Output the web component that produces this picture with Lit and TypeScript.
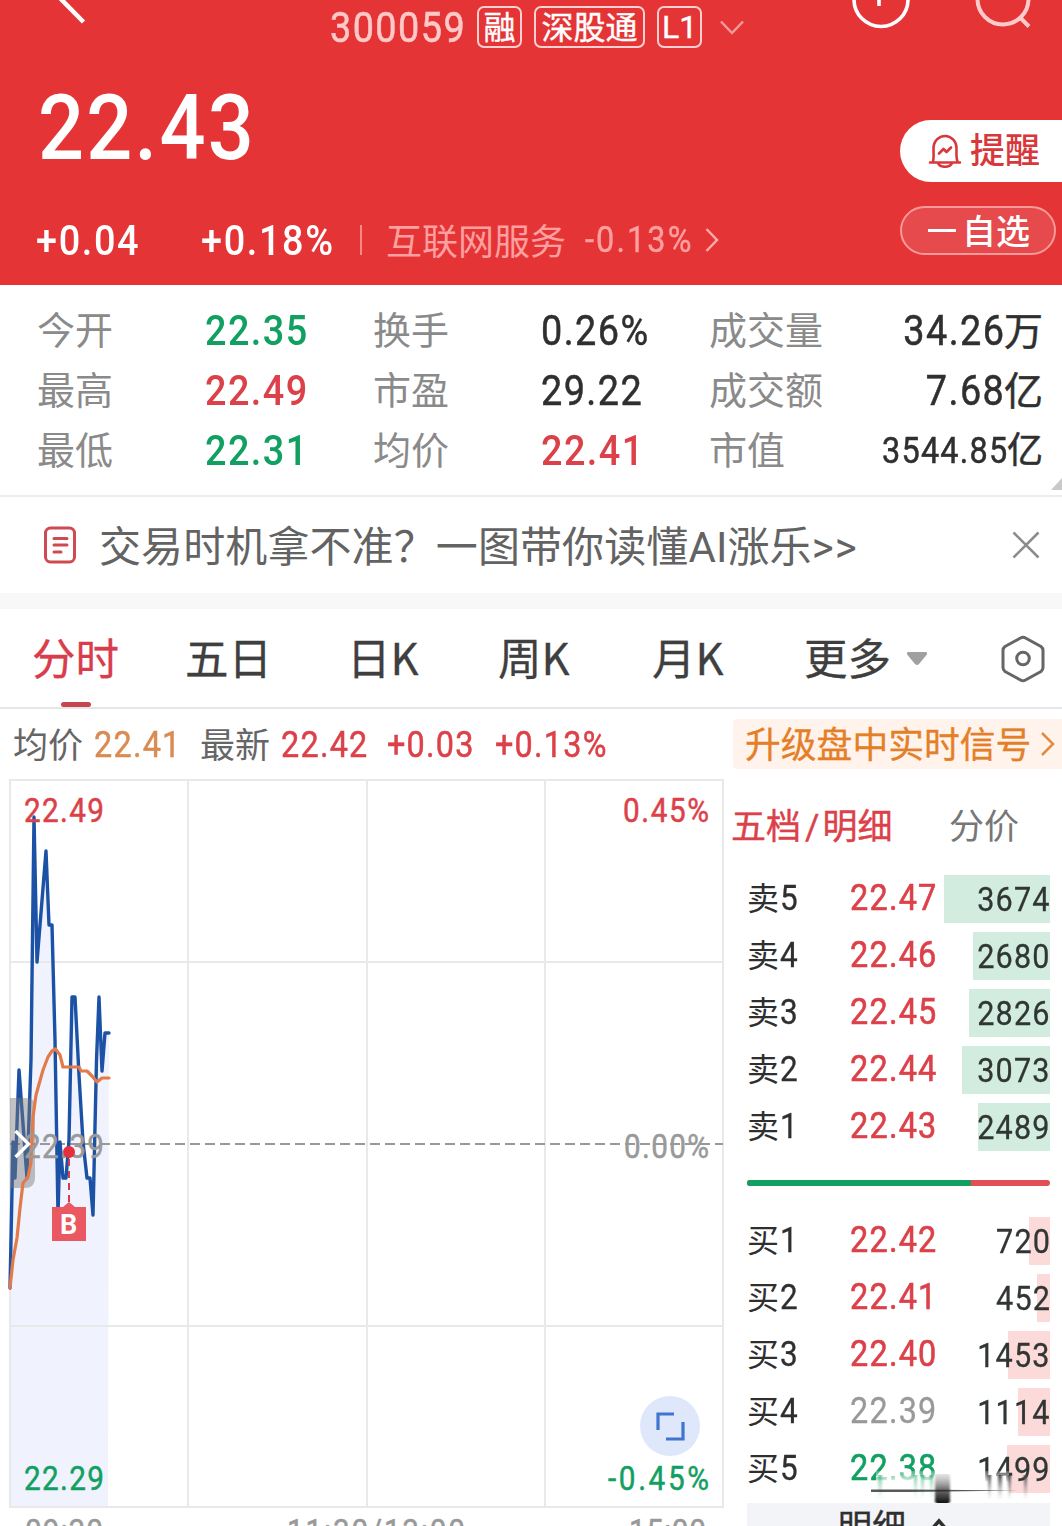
import { LitElement, html, css, svg } from "lit";
import { customElement } from "lit/decorators.js";
import { classMap } from "lit/directives/class-map.js";

const base = css`
  :host {
    display: block;
    box-sizing: border-box;
    font-family: Roboto, "Noto Sans CJK SC", sans-serif;
    white-space: nowrap;
  }
  * {
    box-sizing: border-box;
  }
  svg {
    display: block;
    flex: none;
  }
  .n {
    display: inline-block;
    transform: scaleX(0.9);
    transform-origin: left;
    letter-spacing: 0.038em;
  }
  .n.r {
    transform-origin: right;
    margin-right: -0.03em;
  }
  .red { color: #dc4149; }
  .green { color: #12a062; }
  .gray { color: #999; }
  .dark { color: #2f2f2f; }
`;

@customElement("quote-header")
class QuoteHeader extends LitElement {
  static styles = [
    base,
    css`
      :host {
        height: 285px;
        background: #e43436;
        color: #fff;
        overflow: hidden;
      }
      .top { display: flex; height: 54px; align-items: flex-start; }
      .back { margin-left: 55px; }
      .code {
        margin-left: 239px;
        width: 147px;
        font-size: 42px;
        line-height: 55px;
        color: #ffc9c8;
        -webkit-text-stroke: 0.5px #ffc9c8;
      }
      .tag {
        margin-top: 6px;
        height: 42px;
        line-height: 40px;
        border: 2px solid #ffd0cf;
        border-radius: 7px;
        font-size: 32px;
        text-align: center;
        margin-right: 12px;
        -webkit-text-stroke: 0.4px #fff;
      }
      .t1 { width: 45px; }
      .t2 { width: 111px; }
      .t3 { width: 45px; line-height: 39px; }
      .down { margin: 20px 0 0 6px; }
      .info { margin-left: 106px; }
      .search { margin-left: 60px; }
      .mid { display: flex; justify-content: space-between; height: 146px; }
      .price {
        padding-left: 38px;
        font-size: 90px;
        font-weight: 500;
        line-height: 149px;
      }
      .price .n { letter-spacing: 0.028em; }
      .remind {
        margin-top: 66px;
        width: 162px;
        height: 62px;
        border-radius: 31px 0 0 31px;
        background: #fff;
        color: #d8383c;
        display: flex;
        align-items: center;
        padding: 0 0 0 28px;
        font-size: 35px;
        line-height: 64px;
        font-weight: 500;
      }
      .remind span { margin-left: 8px; height: 62px; }
      .low { display: flex; height: 80px; align-items: center; }
      .chg { font-size: 42px; font-weight: 500; line-height: 81px; }
      .chg .n { letter-spacing: 0.044em; }
      .c1 { width: 165px; padding-left: 36px; }
      .c2 { width: 195px; padding-left: 36px; }
      .bar { width: 2px; height: 30px; background: #f58a8a; }
      .sector { margin: -3px 0 0 24px; font-size: 36px; color: #ff9f9f; }
      .sub { margin-left: 19px; font-size: 36px; width: 120px; color: #ff9f9f; }
      .sub .n { letter-spacing: 0.065em; -webkit-text-stroke: 0.4px; }
      .fav {
        margin: -19px 0 0 181px;
        width: 156px;
        height: 49px;
        border: 2px solid #f89a9a;
        border-radius: 25px;
        background: #e64a4c;
        display: flex;
        align-items: center;
        padding-left: 26px;
        font-size: 34px;
        line-height: 48px;
        font-weight: 500;
      }
      .fav i { width: 28px; height: 3px; background: #fff; margin-right: 6px; }
      .fav span { height: 45px; }
    `,
  ];
  render() {
    return html`
      <div class="top">
        <svg class="back" width="36" height="30" fill="none" stroke="#fff" stroke-width="4.5">
          <path d="M0 -7L28.500 22" />
        </svg>
        <span class="code"><span class="n">300059</span></span>
        <span class="tag t1">融</span>
        <span class="tag t2">深股通</span>
        <span class="tag t3">L1</span>
        <svg class="down" width="24" height="16" fill="none" stroke="#f59a9a" stroke-width="2.500">
          <path d="M1 1.500L12 13L23 1.500" />
        </svg>
        <svg class="info" width="62" height="32" fill="none" stroke="#fff" stroke-width="3.600">
          <circle cx="31" cy="-.5" r="27" />
          <path d="M29 -4V6" />
        </svg>
        <svg class="search" width="62" height="32" fill="none" stroke="#ffcccb" stroke-width="4">
          <circle cx="31" cy="-1" r="25.500" />
          <path d="M47 16.500L57 26.500" />
        </svg>
      </div>
      <div class="mid">
        <span class="price"><span class="n">22.43</span></span>
        <div class="remind">
          <svg width="34" height="34" fill="none" stroke="#d8383c" stroke-width="2.600" stroke-linejoin="round" stroke-linecap="round">
            <path d="M5 27.500C6 24 5.500 19 5.500 14.500C5.500 7 11 2 17 2S28.500 7 28.500 14.500C28.500 19 28 24 29.500 27.500" />
            <path d="M2 28.500H32M10 29C12 34 22 34 24 29M11 19.500L15.500 15L18.500 18L23 13.500" />
          </svg>
          <span>提醒</span>
        </div>
      </div>
      <div class="low">
        <span class="chg c1"><span class="n">+0.04</span></span>
        <span class="chg c2"><span class="n">+0.18%</span></span>
        <i class="bar"></i>
        <span class="sector">互联网服务</span>
        <span class="sub"><span class="n">-0.13%</span></span>
        <svg width="14" height="26" fill="none" stroke="#ffaaaa" stroke-width="2.500">
          <path d="M1.500 2L12 13L1.500 24" />
        </svg>
        <div class="fav"><i></i><span>自选</span></div>
      </div>
    `;
  }
}

@customElement("quote-stats")
class QuoteStats extends LitElement {
  static styles = [
    base,
    css`
      :host {
        height: 212px;
        padding-top: 16px;
        border-bottom: 2px solid #ececec;
        background: #fff;
        position: relative;
      }
      .grid {
        display: grid;
        grid-template-columns: 168px 168px 168px 168px 130px 204px;
        grid-auto-rows: 60px;
        line-height: 60px;
        padding-left: 37px;
        font-size: 42px;
      }
      .label { font-size: 38px; color: #8a8a8a; line-height: 61px; }
      .num { font-weight: 500; }
      .dark { font-weight: 400; -webkit-text-stroke: 0.5px #2f2f2f; }
      .last { text-align: right; }
      .last small { font-size: 39px; }
      .small { font-size: 36px; }
      .small small { font-size: 36px; }
      .corner { position: absolute; right: 0; bottom: 5px; }
    `,
  ];
  render() {
    return html`
      <div class="grid">
        <span class="label">今开</span><span class="num green"><span class="n">22.35</span></span>
        <span class="label">换手</span><span class="num dark"><span class="n">0.26%</span></span>
        <span class="label">成交量</span><span class="num dark last"><span class="n r">34.26</span><small>万</small></span>
        <span class="label">最高</span><span class="num red"><span class="n">22.49</span></span>
        <span class="label">市盈</span><span class="num dark"><span class="n">29.22</span></span>
        <span class="label">成交额</span><span class="num dark last"><span class="n r">7.68</span><small>亿</small></span>
        <span class="label">最低</span><span class="num green"><span class="n">22.31</span></span>
        <span class="label">均价</span><span class="num red"><span class="n">22.41</span></span>
        <span class="label">市值</span><span class="num dark last small"><span class="n r">3544.85</span><small>亿</small></span>
      </div>
      <svg class="corner" width="11" height="12"><path d="M0 12L11 0V12Z" fill="#c9c9c9" /></svg>
    `;
  }
}

@customElement("notice-bar")
class NoticeBar extends LitElement {
  static styles = [
    base,
    css`
      :host {
        height: 112px;
        padding: 0 22px 0 43px;
        border-bottom: 16px solid #f8f8f8;
        display: flex;
        align-items: center;
        background: #fff;
        color: #636363;
      }
      .text { flex: 1; height: 96px; margin-left: 22px; font-size: 42px; line-height: 101px; letter-spacing: 0.1px; }
      .text b { font-weight: 400; letter-spacing: 1.2px; }
    `,
  ];
  render() {
    return html`
      <svg width="34" height="38" fill="none" stroke="#cf4a50" stroke-width="3" stroke-linecap="round">
        <rect x="2.500" y="2" width="29" height="34" rx="5" />
        <path d="M11 12.500H24M11 19H24M11 26H18" />
      </svg>
      <span class="text">交易时机拿不准？一图带你读懂AI涨乐<b>&gt;&gt;</b></span>
      <svg width="28" height="28" fill="none" stroke="#8c8c8c" stroke-width="2.600">
        <path d="M1.500 1.500L26.500 26.500M26.500 1.500L1.500 26.500" />
      </svg>
    `;
  }
}

@customElement("period-tabs")
class PeriodTabs extends LitElement {
  static styles = [
    base,
    css`
      :host {
        height: 100px;
        border-bottom: 2px solid #e6e6e6;
        background: #fff;
      }
      .row {
        display: grid;
        grid-template-columns: 153px 162px 151px 154px 152px 102px 95px 62px;
        align-items: center;
        height: 100px;
        padding-left: 32px;
        font-size: 43.5px;
        line-height: 96px;
        color: #3f3f3f;
        font-family: "Noto Sans CJK SC", sans-serif;
        -webkit-text-stroke: 0.3px;
      }
      .tab { display: flex; flex-direction: column; height: 100px; }
      .active { color: #d93d4c; }
      .active::after {
        content: "";
        width: 30px;
        height: 5px;
        margin: -3px 0 0 29px;
        border-radius: 3px;
        background: #c5454f;
      }
    `,
  ];
  render() {
    return html`
      <div class="row">
        ${["分时", "五日", "日K", "周K", "月K", "更多"].map(
          (t, i) => html`<span class=${classMap({ tab: true, active: i === 0 })}>${t}</span>`,
        )}
        <svg width="22" height="14"><path d="M2 0H20Q22 1 20.500 3L13 12Q11 14 9 12L1.500 3Q0 1 2 0Z" fill="#a0a0a0" /></svg>
        <svg width="44" height="48" fill="none" stroke="#666" stroke-width="3" stroke-linejoin="round">
          <path d="M19.500 3Q22 1.500 24.500 3L40 11.500Q42 13 42 15.500V32.500Q42 35 40 36.500L24.500 45Q22 46.500 19.500 45L4 36.500Q2 35 2 32.500V15.500Q2 13 4 11.500Z" />
          <circle cx="22" cy="23.500" r="6.300" />
        </svg>
      </div>
    `;
  }
}

@customElement("price-line")
class PriceLine extends LitElement {
  static styles = [
    base,
    css`
      :host {
        height: 70px;
        display: flex;
        background: #fff;
        font-size: 36px;
        line-height: 72px;
      }
      .left {
        display: grid;
        grid-template-columns: 81px 106px 81px 106px 108px 238px;
        padding-left: 13px;
      }
      .label { font-size: 35px; color: #666; line-height: 75px; }
      .avg { color: #d98b52; }
      .num { -webkit-text-stroke: 0.5px; }
      .promo {
        margin-top: 10px;
        width: 329px;
        height: 50px;
        line-height: 55px;
        padding-left: 12px;
        border-radius: 4px 0 0 4px;
        background: #fff3ec;
        color: #e57f27;
        font-size: 35.8px;
        display: flex;
        align-items: center;
        gap: 10px;
      }
      .promo span { height: 50px; -webkit-text-stroke: 0.3px; }
    `,
  ];
  render() {
    return html`
      <div class="left">
        <span class="label">均价</span><span class="num avg"><span class="n">22.41</span></span>
        <span class="label">最新</span><span class="num red"><span class="n">22.42</span></span>
        <span class="num red"><span class="n">+0.03</span></span>
        <span class="num red"><span class="n">+0.13%</span></span>
      </div>
      <div class="promo">
        <span>升级盘中实时信号</span>
        <svg width="14" height="26" fill="none" stroke="#e28a40" stroke-width="2.500"><path d="M1 2L12 13L1 24" /></svg>
      </div>
    `;
  }
}

const PRICE = [
  [10, 1288], [13, 1142], [15, 1178], [19, 1070], [27, 1178], [31, 1060], [34, 817], [37, 962],
  [46, 851], [49, 925], [52, 925], [55, 1040], [58, 1215], [60, 1142], [63, 1178], [66, 1178],
  [69, 1140], [72, 997], [75, 997], [79, 1075], [83, 1142], [87, 1178], [90, 1178], [93, 1215],
  [96.5, 1060], [99, 997], [102, 1071], [105, 1033], [109, 1033],
];
const AVERAGE = [
  [10, 1288], [13, 1260], [17, 1238], [20, 1208], [23, 1183], [28, 1177], [31, 1162], [33, 1117],
  [36, 1095], [43, 1070], [48, 1057], [52, 1051], [55.5, 1049], [60, 1055], [63, 1067], [79, 1067],
  [81, 1071], [87, 1071], [92, 1076], [97, 1082], [102, 1078], [109, 1078],
];
const TOP = 779;
const points = (p: number[][]) => p.map(([x, y]) => `${x},${y - TOP}`).join(" ");

const SQUEEZE = 0.9;
const label = (cls: string, x: number, y: number, width: number, text: string) => svg`
  <g transform="translate(${x} ${y}) scale(${SQUEEZE} 1)">
    <text class=${cls} textLength=${width / SQUEEZE}>${text}</text>
  </g>`;

@customElement("minute-chart")
class MinuteChart extends LitElement {
  static styles = [
    base,
    css`
      :host { width: 725px; height: 747px; overflow: hidden; }
      text { font-family: Roboto, sans-serif; font-size: 33px; stroke-width: 0.5px; }
      .axis { fill: #999; stroke: #999; }
      .up { fill: #dc4149; stroke: #dc4149; }
      .flat { fill: #999; stroke: #999; }
      .dn { fill: #12a062; stroke: #12a062; }
      .mark { fill: #fff; font-size: 27px; font-weight: 700; }
    `,
  ];
  render() {
    return html`
      <svg width="725" height="747">
        <polygon points="10,727 ${points(PRICE)} 108,727" fill="#f0f3fe" />
        <g fill="none" stroke="#e9e9e9" stroke-width="2">
          <rect x="10" y="1" width="713" height="727" />
          <path d="M188 1V728M367 1V728M545 1V728M10 183H723M10 547H723" />
        </g>
        <path d="M10 365H723" stroke="#999" stroke-width="2" stroke-dasharray="10 5" />
        <polyline points=${points(PRICE)} fill="none" stroke="#1c52a5" stroke-width="3.400" stroke-linejoin="round" stroke-linecap="round" />
        <path d="M10 319H27Q35 319 35 328V398Q35 409 25 409H10Z" fill="#777" fill-opacity=".45" />
        <polyline points=${points(AVERAGE)} fill="none" stroke="#e27a4a" stroke-width="3.200" stroke-linejoin="round" stroke-linecap="round" />
        ${label("up", 24, 43, 80, "22.49")}
        ${label("up", 623, 43, 86, "0.45%")}
        ${label("flat", 24, 379, 80, "22.39")}
        ${label("flat", 624, 379, 85, "0.00%")}
        ${label("dn", 24, 711, 80, "22.29")}
        ${label("dn", 608, 711, 101, "-0.45%")}
        <path d="M15.500 352L28.500 365L15.500 378" fill="none" stroke="#fff" stroke-width="3.400" />
        <circle cx="69" cy="373" r="6" fill="#e5303c" />
        <path d="M69 380V424" stroke="#d83a4c" stroke-width="2" stroke-dasharray="7 5" />
        <path d="M52 428H63L69 423L75 428H86V462H52Z" fill="#ea5862" />
        <text class="mark" x="60" y="455">B</text>
        <circle cx="670" cy="647" r="30" fill="#dfe8fa" />
        <path d="M658 651V635H674M683 643V660H666" fill="none" stroke="#3f74cf" stroke-width="3.200" />
        ${label("axis", 25, 764, 78, "09:30")}
        ${label("axis", 287, 764, 178, "11:30/13:00")}
        ${label("axis", 629, 764, 77, "15:00")}
      </svg>
    `;
  }
}

type Level = [string, string, number, number, string];
const SELL: Level[] = [
  ["卖5", "22.47", 3674, 106, "red"],
  ["卖4", "22.46", 2680, 77, "red"],
  ["卖3", "22.45", 2826, 81, "red"],
  ["卖2", "22.44", 3073, 88, "red"],
  ["卖1", "22.43", 2489, 72, "red"],
];
const BUY: Level[] = [
  ["买1", "22.42", 720, 21, "red"],
  ["买2", "22.41", 452, 13, "red"],
  ["买3", "22.40", 1453, 42, "red"],
  ["买4", "22.39", 1114, 32, "gray"],
  ["买5", "22.38", 1499, 43, "green"],
];

@customElement("order-book")
class OrderBook extends LitElement {
  static styles = [
    base,
    css`
      :host { width: 337px; height: 747px; overflow: hidden; padding-right: 12px; position: relative; }
      .tabs { display: flex; height: 91px; line-height: 97px; font-size: 35px; padding-left: 6px; }
      .on { width: 218px; -webkit-text-stroke: 0.4px; }
      .on i { font-style: normal; margin: 0 3px 0 4px; }
      .off { color: #777; }
      .rows { padding-left: 22px; }
      .row {
        height: 57px;
        display: grid;
        grid-template-rows: 57px;
        grid-template-columns: 103px 87px 113px;
        align-items: center;
        line-height: 57px;
        font-size: 36px;
      }
      .label { font-size: 32px; color: #2f2f2f; line-height: 59px; }
      .label b { font-weight: 400; font-size: 35px; margin-left: 1px; -webkit-text-stroke: 0.3px; }
      .px { -webkit-text-stroke: 0.6px; }
      .gray { -webkit-text-stroke: 0.3px; }
      .qty {
        height: 48px;
        line-height: 48px;
        font-size: 34px;
        display: grid;
        justify-items: end;
      }
      .qty > * { grid-area: 1 / 1; }
      .fill { height: 48px; }
      .sell { background: #d2ede0; }
      .buy { background: #fcdada; }
      .v { color: #303634; -webkit-text-stroke: 0.3px; }
      .ratio {
        display: flex;
        height: 6px;
        margin: 25px 0 26px 22px;
        border-radius: 3px;
        overflow: hidden;
        background: #e24f55;
      }
      .ratio i { width: 224px; background: #12a062; }
      .more {
        margin: 6px 0 0 22px;
        height: 50px;
        background: #f2f4f7;
        display: flex;
        padding-left: 91px;
        gap: 24px;
        font-size: 34px;
        line-height: 48px;
        color: #2f2f2f;
        -webkit-text-stroke: 0.4px;
      }
      .more svg { margin-top: 15px; }
      .smear { position: absolute; left: 145px; top: 692px; }
    `,
  ];
  rows(levels: Level[], side: string) {
    return html`<div class="rows">
      ${levels.map(
        ([name, price, qty, width, tone]) => html`
          <div class="row">
            <span class="label">${name[0]}<b class="n">${name[1]}</b></span>
            <span class="px ${tone}"><span class="n">${price}</span></span>
            <div class="qty"><i class="fill ${side}" style="width:${width}px"></i><span class="v n r">${qty}</span></div>
          </div>
        `,
      )}
    </div>`;
  }
  render() {
    return html`
      <div class="tabs"><span class="on red">五档<i>/</i>明细</span><span class="off">分价</span></div>
      ${this.rows(SELL, "sell")}
      <div class="ratio"><i></i></div>
      ${this.rows(BUY, "buy")}
      <div class="more">
        明细
        <svg width="18" height="14" fill="none" stroke="#2f2f2f" stroke-width="3.500"><path d="M1 12L9 3L17 12" /></svg>
      </div>
      <svg class="smear" width="168" height="33">
        <defs>
          <linearGradient id="w" x1="0" y1="0" x2="0" y2="1">
            <stop offset="0" stop-color="#fff" stop-opacity=".2" /><stop offset=".4" stop-color="#fff" /><stop offset="1" stop-color="#fff" />
          </linearGradient>
          <linearGradient id="k" x1="0" y1="0" x2="0" y2="1">
            <stop offset="0" stop-color="#bbb" stop-opacity=".4" /><stop offset=".5" stop-color="#777" /><stop offset="1" stop-color="#111" />
          </linearGradient>
          <linearGradient id="s" x1="0" y1="0" x2="0" y2="1">
            <stop offset="0" stop-color="#444" /><stop offset="1" stop-color="#aaa" stop-opacity="0" />
          </linearGradient>
          <linearGradient id="g" x1="0" y1="0" x2="0" y2="1">
            <stop offset="0" stop-color="#12a062" /><stop offset="1" stop-color="#9fd8bf" stop-opacity="0" />
          </linearGradient>
          <filter id="b" x="-20%" y="-5%" width="140%" height="110%"><feGaussianBlur stdDeviation="0.8 0" /></filter>
        </defs>
        <rect x="6" y="0" width="133" height="31" fill="url(#w)" />
        <g filter="url(#b)">
          <path d="M8 4h4v25h-4zM44 4h3v25h-3zM51 4h3v25h-3zM60 4h3v25h-3z" fill="url(#g)" opacity=".6" />
          <path d="M118 4h3v25h-3zM128 4h4v25h-4zM138 4h3v25h-3zM154 4h3v25h-3z" fill="url(#s)" />
          <rect x="65" y="3" width="15" height="29" rx="2" fill="url(#k)" />
        </g>
        <path d="M1 18.500H40L150 19.500L40 21H1Z" fill="#222" fill-opacity=".75" />
      </svg>
    `;
  }
}

@customElement("app-root")
class AppRoot extends LitElement {
  static styles = [
    base,
    css`
      :host { width: 1062px; height: 1526px; overflow: hidden; background: #fff; }
      .main { display: flex; height: 747px; }
    `,
  ];
  render() {
    return html`
      <quote-header></quote-header>
      <quote-stats></quote-stats>
      <notice-bar></notice-bar>
      <period-tabs></period-tabs>
      <price-line></price-line>
      <div class="main">
        <minute-chart></minute-chart>
        <order-book></order-book>
      </div>
    `;
  }
}
